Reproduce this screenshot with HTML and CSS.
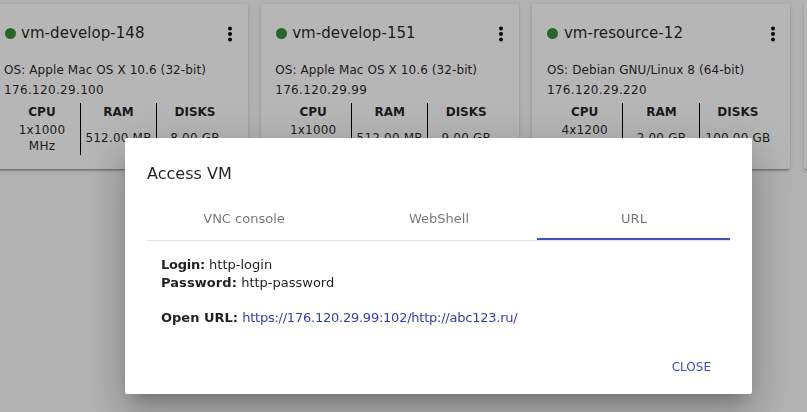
FILE: index.html
```html
<!DOCTYPE html>
<html lang="en">
<head>
<meta charset="utf-8">
<title>Virtual machines</title>
<link rel="stylesheet" href="styles.css">
</head>
<body>
<main class="cards">
  <article class="card">
    <header class="card-head"><span class="status"></span><h2 class="name">vm-develop-148</h2>
      <svg class="more" viewBox="0 0 4 16"><circle cx="2" cy="2.5" r="2"/><circle cx="2" cy="8" r="2"/><circle cx="2" cy="13.5" r="2"/></svg></header>
    <p class="line"><span class="t os">OS: Apple Mac OS X 10.6 (32-bit)</span></p>
    <p class="line"><span class="t">176.120.29.100</span></p>
    <div class="specs">
      <div class="spec"><b>CPU</b><span class="value">1x1000<br>MHz</span></div>
      <div class="spec"><b>RAM</b><span class="value">512.00 MB</span></div>
      <div class="spec"><b>DISKS</b><span class="value">8.00 GB</span></div>
    </div>
  </article>
  <article class="card">
    <header class="card-head"><span class="status"></span><h2 class="name">vm-develop-151</h2>
      <svg class="more" viewBox="0 0 4 16"><circle cx="2" cy="2.5" r="2"/><circle cx="2" cy="8" r="2"/><circle cx="2" cy="13.5" r="2"/></svg></header>
    <p class="line"><span class="t os">OS: Apple Mac OS X 10.6 (32-bit)</span></p>
    <p class="line"><span class="t">176.120.29.99</span></p>
    <div class="specs">
      <div class="spec"><b>CPU</b><span class="value">1x1000<br>MHz</span></div>
      <div class="spec"><b>RAM</b><span class="value">512.00 MB</span></div>
      <div class="spec"><b>DISKS</b><span class="value">9.00 GB</span></div>
    </div>
  </article>
  <article class="card shifted">
    <header class="card-head"><span class="status"></span><h2 class="name">vm-resource-12</h2>
      <svg class="more" viewBox="0 0 4 16"><circle cx="2" cy="2.5" r="2"/><circle cx="2" cy="8" r="2"/><circle cx="2" cy="13.5" r="2"/></svg></header>
    <p class="line"><span class="t os">OS: Debian GNU/Linux 8 (64-bit)</span></p>
    <p class="line"><span class="t">176.120.29.220</span></p>
    <div class="specs wide">
      <div class="spec"><b>CPU</b><span class="value">4x1200<br>MHz</span></div>
      <div class="spec"><b>RAM</b><span class="value">2.00 GB</span></div>
      <div class="spec"><b>DISKS</b><span class="value">100.00 GB</span></div>
    </div>
  </article>
  <article class="card"></article>
</main>
<div class="backdrop">
  <section class="dialog" role="dialog">
    <h1 class="title">Access VM</h1>
    <nav class="tabs">
      <span class="tab">VNC console</span>
      <span class="tab">WebShell</span>
      <span class="tab active">URL</span>
    </nav>
    <div class="content">
      <p class="login"><b>Login:</b> http-login</p>
      <p class="password"><b>Password:</b> http-password</p>
      <p class="url"><b>Open URL:</b> <a class="link">https://176.120.29.99:102/http://abc123.ru/</a></p>
    </div>
    <footer class="actions"><span class="close">CLOSE</span></footer>
  </section>
</div>
</body>
</html>
```
FILE: styles.css
```css
* { box-sizing: border-box; }
body {
  margin: 0;
  height: 412px;
  overflow: hidden;
  background: #fafafa;
  color: rgba(0, 0, 0, .87);
  font: 12px "DejaVu Sans", sans-serif;
}
h1, h2, p { margin: 0; font-weight: 400; }
.cards {
  display: grid;
  grid-template-columns: 258px 258px 258px 13px;
  gap: 13.2px;
  margin: 4px 0 0 -10px;
}
.card {
  height: 165px;
  padding: 14px;
  border-radius: 2px;
  background: #fff;
  box-shadow: 0 3px 1px -2px rgba(0,0,0,.2), 0 2px 2px 0 rgba(0,0,0,.14), 0 1px 5px 0 rgba(0,0,0,.12);
}
.card.shifted { padding: 14px 13.3px 14px 14.5px; }
.card:last-child { padding: 0; border-radius: 2px 0 0 2px; width: 13px; }
.card-head { display: flex; align-items: center; height: 30px; margin-bottom: 12px; }
.status { width: 11px; height: 11px; margin: 0 6px 0 .5px; border-radius: 50%; background: #388e3c; }
.name { flex: 1; margin-left: -.5px; font-size: 15px; letter-spacing: .06px; white-space: nowrap; }
.more { width: 4px; height: 16px; margin: 1px 2px 0 0; fill: #000; }
.line { height: 20px; line-height: 20px; white-space: nowrap; }
.t { letter-spacing: .33px; }
.t.os { letter-spacing: .09px; }
.specs { display: grid; grid-template-columns: 76px 76px 77px; height: 52px; margin-top: 3px; }
.specs.wide { grid-template-columns: 75.5px 77px 76px; }
.spec {
  display: flex;
  flex-direction: column;
  height: 52px;
  text-align: center;
  line-height: 16px;
  white-space: nowrap;
}
.spec + .spec { border-left: 1px solid #000; }
.spec b { height: 18px; line-height: 18px; }
.value { display: grid; flex: 1; align-content: center; letter-spacing: .2px; }
.backdrop { position: fixed; inset: 0; background: rgba(0, 0, 0, .288); }
.dialog {
  display: flex;
  flex-direction: column;
  width: 627px;
  height: 256px;
  margin: 138px 0 0 125px;
  padding: 22px;
  border-radius: 2px;
  background: #fff;
  box-shadow: 0 11px 15px -7px rgba(0,0,0,.2), 0 24px 38px 3px rgba(0,0,0,.14), 0 9px 46px 8px rgba(0,0,0,.12);
}
.title { height: 26px; line-height: 28px; font-size: 16px; letter-spacing: .03px; }
.tabs { display: grid; grid-template-columns: 194px 196px 193px; height: 55px; border-bottom: 1px solid #e0e0e0; }
.tab { padding-top: 13px; height: 54px; line-height: 40px; text-align: center; font-size: 13px; color: rgba(0,0,0,.54); }
.tab.active { padding-left: 1px; border-bottom: 2px solid #3f51b5; }
.content { padding: 15px 14px 0; font-size: 13px; line-height: 18px; }
.login b { letter-spacing: -.25px; }
.password b { letter-spacing: .08px; }
.url { margin-top: 17px; }
.link { color: #3342a6; letter-spacing: -.235px; }
.actions { margin: auto 19px -4px 0; text-align: right; line-height: 18px; color: #3f51b5; }
```
